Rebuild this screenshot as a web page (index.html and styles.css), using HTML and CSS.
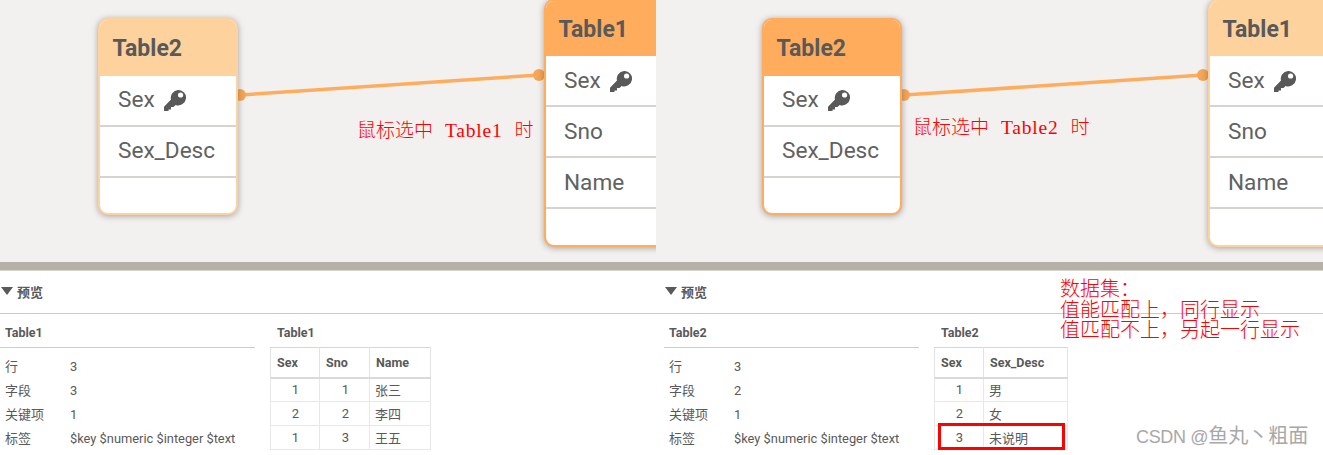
FILE: index.html
```html
<!DOCTYPE html>
<html lang="zh">
<head>
<meta charset="utf-8">
<title>Table association preview</title>
<link rel="stylesheet" href="styles.css">
</head>
<body>
<svg class="defs" width="0" height="0" aria-hidden="true">
  <symbol id="key" viewBox="0 0 22 21">
    <path fill-rule="evenodd" d="M14 0a7.7 7.7 0 1 1-2.4 14.9L9.5 17H7v2.5H4.5V21H0v-4.2L7 9.6A7.7 7.7 0 0 1 14 0ZM16.6 2.4a2.6 2.6 0 1 0 0 5.2a2.6 2.6 0 1 0 0-5.2Z"/>
  </symbol>
</svg>
<main class="page">
  <section class="panel panel-left">
    <div class="canvas">
      <div class="stage">
        <svg class="link" width="660" height="263"><line x1="240" y1="95" x2="539" y2="75"/><circle cx="240" cy="95" r="6"/><circle cx="539" cy="75" r="6"/></svg>
        <div class="node node-a">
          <div class="node-head">Table2</div>
          <div class="node-row">Sex<svg class="key"><use href="#key"/></svg></div>
          <div class="node-row">Sex_Desc</div>
          <div class="node-foot"></div>
        </div>
        <div class="node node-b selected">
          <div class="node-head">Table1</div>
          <div class="node-row">Sex<svg class="key"><use href="#key"/></svg></div>
          <div class="node-row">Sno</div>
          <div class="node-row">Name</div>
          <div class="node-foot"></div>
        </div>
        <p class="note note-left">鼠标选中<span class="latin">Table1</span>时</p>
      </div>
    </div>
    <div class="splitter"></div>
    <div class="preview">
      <div class="preview-head"><span class="caret"></span><span class="preview-title">预览</span></div>
      <div class="preview-body">
        <div class="meta">
          <h3 class="meta-title">Table1</h3>
          <dl class="meta-list">
            <dt>行</dt><dd>3</dd>
            <dt>字段</dt><dd>3</dd>
            <dt>关键项</dt><dd>1</dd>
            <dt>标签</dt><dd>$key $numeric $integer $text</dd>
          </dl>
        </div>
        <div class="data">
          <h3 class="data-title">Table1</h3>
          <table class="grid">
            <tr><th class="c49">Sex</th><th class="c50">Sno</th><th class="c61">Name</th></tr>
            <tr><td class="num">1</td><td class="num">1</td><td>张三</td></tr>
            <tr><td class="num">2</td><td class="num">2</td><td>李四</td></tr>
            <tr><td class="num">1</td><td class="num">3</td><td>王五</td></tr>
          </table>
        </div>
      </div>
    </div>
  </section>
  <section class="panel panel-right">
    <div class="canvas">
      <div class="stage">
        <svg class="link" width="660" height="263"><line x1="240" y1="95" x2="539" y2="75"/><circle cx="240" cy="95" r="6"/><circle cx="539" cy="75" r="6"/></svg>
        <div class="node node-a selected">
          <div class="node-head">Table2</div>
          <div class="node-row">Sex<svg class="key"><use href="#key"/></svg></div>
          <div class="node-row">Sex_Desc</div>
          <div class="node-foot"></div>
        </div>
        <div class="node node-b">
          <div class="node-head">Table1</div>
          <div class="node-row">Sex<svg class="key"><use href="#key"/></svg></div>
          <div class="node-row">Sno</div>
          <div class="node-row">Name</div>
          <div class="node-foot"></div>
        </div>
        <p class="note note-right">鼠标选中<span class="latin">Table2</span>时</p>
      </div>
    </div>
    <div class="splitter"></div>
    <div class="preview">
      <div class="preview-head"><span class="caret"></span><span class="preview-title">预览</span></div>
      <div class="preview-body">
        <div class="meta">
          <h3 class="meta-title">Table2</h3>
          <dl class="meta-list">
            <dt>行</dt><dd>3</dd>
            <dt>字段</dt><dd>2</dd>
            <dt>关键项</dt><dd>1</dd>
            <dt>标签</dt><dd>$key $numeric $integer $text</dd>
          </dl>
        </div>
        <div class="data">
          <h3 class="data-title">Table2</h3>
          <table class="grid">
            <tr><th class="c49">Sex</th><th class="c84">Sex_Desc</th></tr>
            <tr><td class="num">1</td><td>男</td></tr>
            <tr><td class="num">2</td><td>女</td></tr>
            <tr><td class="num">3</td><td>未说明</td></tr>
          </table>
          <div class="highlight"></div>
        </div>
      </div>
      <p class="dataset-note">数据集：<br>值能匹配上，同行显示<br>值匹配不上，另起一行显示</p>
      <p class="watermark"><span class="wm-latin">CSDN @</span>鱼丸丶粗面</p>
    </div>
  </section>
</main>
</body>
</html>
```

FILE: styles.css
```css
* { box-sizing: border-box; }
html, body { margin: 0; padding: 0; height: 455px; overflow: hidden; background: #fff; }
body { font-family: Roboto, "Noto Sans CJK SC", sans-serif; color: #595959; }
.defs { position: absolute; }
.page { display: flex; width: 1323px; height: 455px; }
.panel { position: relative; overflow: hidden; flex: none; }
.panel-left { width: 656px; }
.panel-right { width: 667px; }
.canvas { height: 262px; background: #f2f1f0; overflow: hidden; }
.stage { position: relative; height: 262px; }
.panel-right .stage { margin-left: 8px; }
.link { position: absolute; left: 0; top: 0; }
.link line { stroke: #ffad5c; stroke-width: 3.5; }
.link circle { fill: #f5a658; }

.node { position: absolute; width: 140px; background: #fff; border: 2px solid #fdd29c; border-radius: 10px; box-shadow: 0 1px 6px rgba(70, 60, 50, .45); overflow: hidden; }
.node.selected { border-color: #ffad5c; }
.node-a { left: 98px; top: 18px; height: 197px; }
.node-b { left: 544px; top: -1px; height: 248px; }
.node-head { height: 55px; padding: 0 12.5px; background: #fdd29c; font-size: 23px; font-weight: 700; line-height: 57px; }
.node-a .node-head { height: 56px; line-height: 57px; }
.node.selected .node-head { background: #ffad5c; }
.node-row { display: flex; align-items: center; height: 51px; padding: 0 0 0 18px; border-bottom: 2px solid #d6d3d0; color: #616161; font-size: 22.6px; font-weight: 400; }
.node-a .node-row { padding-bottom: 2px; }
.node-foot { height: 36px; }
.key { width: 22px; height: 21px; margin: 1px 0 0 9px; fill: #595959; }

.note { position: absolute; margin: 0; color: #f00; font-size: 19px; line-height: 24px; white-space: nowrap; font-weight: 300; }
.note-left { left: 357px; top: 119px; }
.note-right { left: 249px; top: 116px; }
.latin { margin: 0 12px; font-family: "Liberation Serif", serif; font-size: 19.5px; font-weight: 400; letter-spacing: .8px; }

.splitter { height: 9px; background: #b6b0a9; border-bottom: 1px solid #d8d5d0; }
.preview { position: relative; height: 184px; background: #fff; }
.preview-head { display: flex; align-items: center; gap: 4px; height: 43px; padding: 0 0 2px 1px; border-bottom: 1px solid #cfccc6; }
.panel-right .preview-head { padding-left: 9px; }
.caret { width: 0; height: 0; border-left: 6px solid transparent; border-right: 6px solid transparent; border-top: 8px solid #595959; }
.preview-title { font-size: 13px; font-weight: 700; }
.preview-body { display: flex; gap: 15px; }
.panel-right .preview-body { padding-left: 8px; }
.meta { width: 255px; flex: none; }
h3 { margin: 0; font-size: 12.5px; font-weight: 700; }
.meta-title { height: 34px; padding-left: 5px; line-height: 37px; border-bottom: 1px solid #cfccc6; }
.meta-list { display: grid; grid-template-columns: 65px 1fr; grid-auto-rows: 24px; margin: 7px 0 0; padding-left: 5px; font-size: 13px; line-height: 24px; }
.meta-list dd { margin: 0; font-size: 12.85px; }
.data { position: relative; }
.data-title { height: 33px; padding-left: 7px; line-height: 37px; }
.grid { border-collapse: collapse; table-layout: fixed; font-size: 12.5px; }
.grid th { height: 30px; padding: 0 6px; text-align: left; font-weight: 700; border: 1px solid #e3e2e0; border-bottom: 2px solid #dcdad7; border-top-color: #d8d6d3; }
.grid td { height: 24px; padding: 0 5px; border: 1px solid #e9e8e7; font-size: 13px; }
.grid td.num { padding-right: 20px; text-align: right; }
.c49 { width: 49px; }
.c50 { width: 50px; }
.c61 { width: 61px; }
.c84 { width: 84px; }
.highlight { position: absolute; left: 4px; top: 109px; width: 127px; height: 27px; border: 3px solid #f00; }
.dataset-note { position: absolute; left: 404px; top: 8px; margin: 0; color: #f00; font-size: 20px; line-height: 20.5px; font-weight: 300; white-space: nowrap; }
.watermark { position: absolute; left: 480px; top: 153px; margin: 0; color: #a8a8a8; font-size: 20px; line-height: 24px; font-family: "Liberation Sans", "Noto Sans CJK SC", sans-serif; white-space: nowrap; }
.wm-latin { font-size: 18px; letter-spacing: -.35px; }
```
